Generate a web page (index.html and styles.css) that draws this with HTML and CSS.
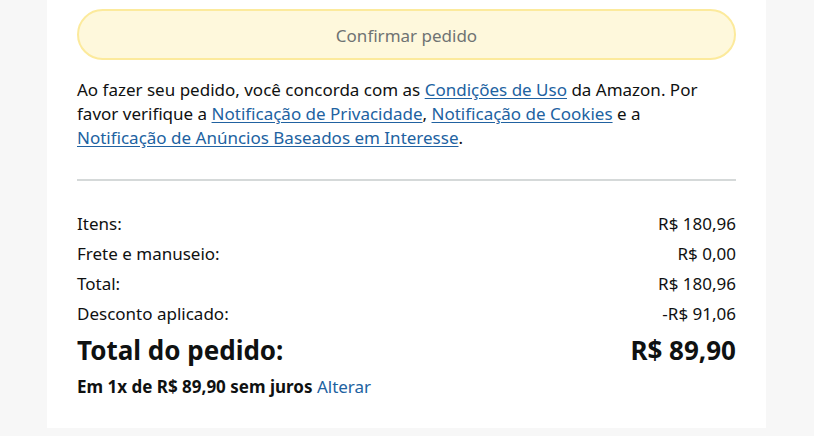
FILE: index.html
```html
<!DOCTYPE html>
<html lang="pt-BR">
<head>
<meta charset="utf-8">
<link rel="stylesheet" href="styles.css">
</head>
<body>
<div class="panel">
  <button class="confirm">Confirmar pedido</button>
  <p class="legal">Ao fazer seu pedido, você concorda com as <a href="#">Condições de Uso</a> da Amazon. Por favor verifique a <a href="#">Notificação de Privacidade</a>, <a href="#">Notificação de Cookies</a> e a <a class="nowrap" href="#">Notificação de Anúncios Baseados em Interesse</a>.</p>
  <hr class="divider">
  <div class="rows">
    <div class="row"><span>Itens:</span><span>R$ 180,96</span></div>
    <div class="row"><span>Frete e manuseio:</span><span>R$ 0,00</span></div>
    <div class="row"><span>Total:</span><span>R$ 180,96</span></div>
    <div class="row"><span>Desconto aplicado:</span><span>-R$ 91,06</span></div>
  </div>
  <div class="grand"><span>Total do pedido:</span><span>R$ 89,90</span></div>
  <div class="install">Em 1x de R$ 89,90 sem juros <a href="#">Alterar</a></div>
</div>
</body>
</html>
```
FILE: styles.css
```css
html, body {
  margin: 0;
  padding: 0;
  background: #f7f7f7;
  font-family: "Noto Sans", sans-serif;
  color: #0f1111;
}
.panel {
  margin-left: 47px;
  width: 719px;
  height: 428px;
  background: #fff;
  box-sizing: border-box;
  padding: 9px 30px 0 30px;
}
.confirm {
  display: block;
  width: 100%;
  height: 51px;
  border: 2px solid #fcea9c;
  background: #fef8dc;
  border-radius: 26px;
  font-family: inherit;
  font-size: 17px;
  color: #6f7373;
  padding: 2px 0 0 0;
}
.legal {
  margin: 18px 0 0 0;
  font-size: 17px;
  line-height: 24px;
}
.legal a {
  color: #2162a1;
  text-underline-offset: 2px;
}
.legal .nowrap {
  white-space: nowrap;
}
.divider {
  border: 0;
  border-top: 2px solid #d5d9d9;
  margin: 29px 0 0 0;
}
.rows {
  margin-top: 28px;
}
.row, .grand {
  display: flex;
  justify-content: space-between;
}
.row {
  font-size: 17px;
  line-height: 30px;
}
.grand {
  font-size: 26px;
  font-weight: 700;
  line-height: 38px;
  margin-top: 2px;
}
.install {
  font-size: 17px;
  font-weight: 700;
  line-height: 34px;
  margin-top: 1px;
}
.install a {
  font-weight: 400;
  color: #2162a1;
  text-decoration: none;
}
```
